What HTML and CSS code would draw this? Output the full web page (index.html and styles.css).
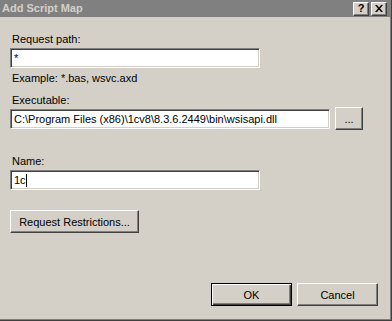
FILE: index.html
```html
<!DOCTYPE html>
<html lang="en">
<head>
    <meta charset="UTF-8">
    <title>Add Script Map</title>
    <link rel="stylesheet" href="styles.css">
</head>
<body>
    <div class="window">
        <div class="titlebar">
            <span class="title">Add Script Map</span>
            <div class="title-buttons">
                <span class="title-btn help">?</span>
                <span class="title-btn close">
                    <svg width="8" height="7" viewBox="0 0 8 7">
                        <path d="M0 0h2l2 2.5L6 0h2L5 3.5 8 7H6L4 4.5 2 7H0l3-3.5z" fill="#000"/>
                    </svg>
                </span>
            </div>
        </div>

        <div class="content">
            <label class="label first">Request path:</label>
            <div class="input short">*</div>
            <p class="hint">Example: *.bas, wsvc.axd</p>

            <label class="label exe-label">Executable:</label>
            <div class="exe-row">
                <div class="input long">C:\Program Files (x86)\1cv8\8.3.6.2449\bin\wsisapi.dll</div>
                <button class="btn browse">...</button>
            </div>

            <label class="label name-label">Name:</label>
            <div class="input short">1c<span class="caret"></span></div>

            <button class="btn restrictions">Request Restrictions...</button>

            <div class="footer">
                <button class="btn default">OK</button>
                <button class="btn">Cancel</button>
            </div>
        </div>
    </div>
</body>
</html>
```

FILE: styles.css
```css
* {
    margin: 0;
    padding: 0;
    box-sizing: border-box;
}

body {
    background-color: #d4d0c8;
    font-family: 'Liberation Sans', Arial, sans-serif;
    font-size: 11px;
    line-height: 13px;
    color: #000;
}

.window {
    width: 392px;
    height: 321px;
    display: flex;
    flex-direction: column;
    background-color: #d4d0c8;
    border-right: 1px solid #404040;
    border-bottom: 1px solid #404040;
    box-shadow: inset -1px -1px #808080;
}

.titlebar {
    height: 17px;
    background-color: #808080;
    display: flex;
    align-items: center;
    justify-content: space-between;
    padding: 0 2px 0 2px;
    margin-right: 1px;
}

.title {
    color: #d4d0c8;
    font-weight: bold;
    font-size: 11px;
}

.title-buttons {
    display: flex;
    gap: 2px;
    margin-right: 1px;
}

.title-btn {
    width: 16px;
    height: 14px;
    background-color: #d4d0c8;
    border: 1px solid;
    border-color: #fff #404040 #404040 #fff;
    box-shadow: inset -1px -1px #808080;
    display: flex;
    align-items: center;
    justify-content: center;
    font-weight: bold;
    font-size: 11px;
}

.content {
    flex: 1;
    display: flex;
    flex-direction: column;
    align-items: flex-start;
    padding: 0 0 14px 10px;
}

.label {
    display: block;
    padding-left: 2px;
}

.label.first {
    margin-top: 16px;
}

.input {
    height: 20px;
    background-color: #fff;
    border: 1px solid;
    border-color: #808080 #fff #fff #808080;
    box-shadow: inset 1px 1px #404040, inset -1px -1px #d4d0c8;
    padding: 3px 0 0 3px;
    white-space: nowrap;
    overflow: hidden;
    margin-top: 2px;
}

.input.short {
    width: 250px;
}

.input.long {
    width: 320px;
    margin-top: 0;
}

.caret {
    display: inline-block;
    width: 1px;
    height: 13px;
    background-color: #000;
    vertical-align: -3px;
}

.hint {
    margin-top: 4px;
    padding-left: 2px;
}

.exe-label {
    margin-top: 9px;
}

.exe-row {
    display: flex;
    align-items: center;
    gap: 5px;
    height: 23px;
}

.name-label {
    margin-top: 25px;
}

.btn {
    height: 23px;
    background-color: #d4d0c8;
    font-family: inherit;
    font-size: 11px;
    color: #000;
    border: 1px solid;
    border-color: #fff #404040 #404040 #fff;
    box-shadow: inset -1px -1px #808080;
}

.browse {
    width: 28px;
}

.restrictions {
    width: 129px;
    margin-top: 20px;
}

.footer {
    margin-top: auto;
    align-self: flex-end;
    display: flex;
    gap: 5px;
    margin-right: 13px;
}

.footer .btn {
    width: 81px;
}

.btn.default {
    border: 1px solid #000;
    box-shadow: inset 1px 1px #fff, inset -1px -1px #404040, inset -2px -2px #808080;
}
```
